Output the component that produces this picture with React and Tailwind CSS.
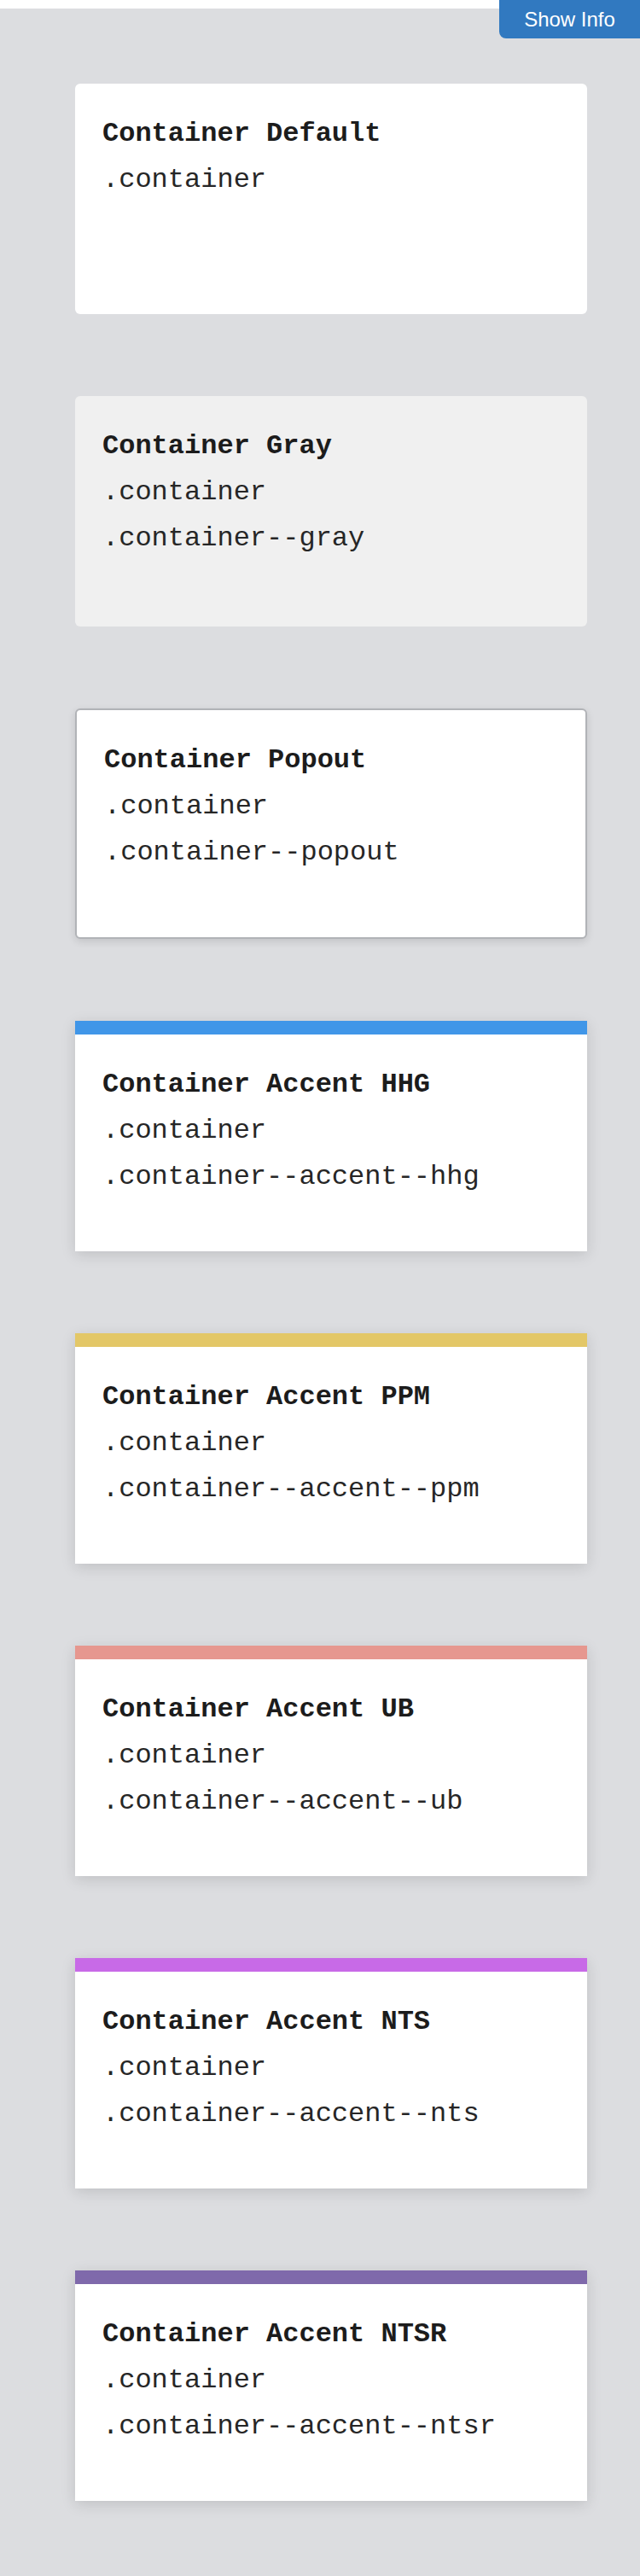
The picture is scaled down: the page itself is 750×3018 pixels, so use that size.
const cards = [
  { title: 'Container Default', classes: ['.container'], variant: 'default' },
  { title: 'Container Gray', classes: ['.container', '.container--gray'], variant: 'gray' },
  { title: 'Container Popout', classes: ['.container', '.container--popout'], variant: 'popout' },
  { title: 'Container Accent HHG', classes: ['.container', '.container--accent--hhg'], variant: 'hhg' },
  { title: 'Container Accent PPM', classes: ['.container', '.container--accent--ppm'], variant: 'ppm' },
  { title: 'Container Accent UB', classes: ['.container', '.container--accent--ub'], variant: 'ub' },
  { title: 'Container Accent NTS', classes: ['.container', '.container--accent--nts'], variant: 'nts' },
  { title: 'Container Accent NTSR', classes: ['.container', '.container--accent--ntsr'], variant: 'ntsr' },
];

const variantClasses = {
  default: 'bg-white rounded-md',
  gray: 'bg-[#f0f0f0] rounded-md',
  popout: 'bg-white rounded-md border-2 border-[#b1b3b7] shadow-[0_3px_10px_rgba(0,0,0,0.12)]',
  hhg: 'bg-white border-t-16 border-[#4096e8] shadow-[0_4px_16px_rgba(0,0,0,0.13)]',
  ppm: 'bg-white border-t-16 border-[#e3c767] shadow-[0_4px_16px_rgba(0,0,0,0.13)]',
  ub: 'bg-white border-t-16 border-[#e6978f] shadow-[0_4px_16px_rgba(0,0,0,0.13)]',
  nts: 'bg-white border-t-16 border-[#c86ae7] shadow-[0_4px_16px_rgba(0,0,0,0.13)]',
  ntsr: 'bg-white border-t-16 border-[#7f69ab] shadow-[0_4px_16px_rgba(0,0,0,0.13)]',
};

function Container({ title, classes, variant }) {
  return (
    <div className={`box-border w-[600px] h-[270px] shrink-0 p-8 ${variantClasses[variant]}`}>
      <h3 className="m-0 text-[32px] leading-[54px] font-bold text-[#1c1c1c]">{title}</h3>
      {classes.map((c) => (
        <p key={c} className="m-0 text-[32px] leading-[54px] text-[#262626]">
          {c}
        </p>
      ))}
    </div>
  );
}

export default function App() {
  return (
    <div
      className="relative w-[750px] bg-white"
      style={{ fontFamily: '"Liberation Mono", "Courier New", monospace' }}
    >
      <div className="h-[10px] bg-white" />
      <button
        className="absolute top-0 right-0 h-[45px] w-[165px] rounded-bl-lg bg-[#3179c0] text-[24px] text-white"
        style={{ fontFamily: '"Liberation Sans", Arial, sans-serif' }}
      >
        Show Info
      </button>
      <main className="flex flex-col gap-[96px] bg-[#dcdde0] pt-[88px] pb-[88px] pl-[88px]">
        {cards.map((card) => (
          <Container key={card.title} {...card} />
        ))}
      </main>
    </div>
  );
}
